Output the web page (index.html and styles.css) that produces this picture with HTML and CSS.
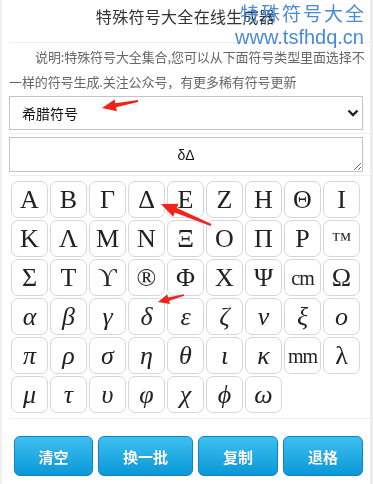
FILE: index.html
```html
<!DOCTYPE html>
<html lang="zh">
<head>
<meta charset="utf-8">
<title>特殊符号大全在线生成器</title>
<link rel="stylesheet" href="styles.css">
</head>
<body>
<div class="page">
  <header class="head">
    <h1 class="title">特殊符号大全在线生成器</h1>
  </header>
  <p class="desc">说明:特殊符号大全集合,您可以从下面符号类型里面选择不一样的符号生成.关注公众号，有更多稀有符号更新</p>
  <div class="row">
    <div class="select-wrap">
      <select class="select">
        <option>希腊符号</option>
      </select>
      <svg class="chev" width="12" height="8" viewBox="0 0 12 8"><path d="M1.5 1.5 L6 6 L10.5 1.5" fill="none" stroke="#222" stroke-width="2.4"/></svg>
    </div>
  </div>
  <div class="row">
    <textarea class="output">δΔ</textarea>
  </div>
  <div class="grid-row">
    <div class="grid">
      <span class="key">Α</span><span class="key">Β</span><span class="key">Γ</span><span class="key">Δ</span><span class="key">Ε</span><span class="key">Ζ</span><span class="key">Η</span><span class="key">Θ</span><span class="key">Ι</span>
      <span class="key">Κ</span><span class="key">Λ</span><span class="key">Μ</span><span class="key">Ν</span><span class="key">Ξ</span><span class="key">Ο</span><span class="key">Π</span><span class="key">Ρ</span><span class="key tm">™</span>
      <span class="key">Σ</span><span class="key">Τ</span><span class="key">ϒ</span><span class="key">®</span><span class="key">Φ</span><span class="key">Χ</span><span class="key">Ψ</span><span class="key unit">cm</span><span class="key">Ω</span>
      <span class="key it">α</span><span class="key it">β</span><span class="key it">γ</span><span class="key it">δ</span><span class="key it">ε</span><span class="key it">ζ</span><span class="key it">ν</span><span class="key it">ξ</span><span class="key it">ο</span>
      <span class="key it">π</span><span class="key it">ρ</span><span class="key it">σ</span><span class="key it">η</span><span class="key it">θ</span><span class="key it">ι</span><span class="key it">κ</span><span class="key unit">mm</span><span class="key">λ</span>
      <span class="key it">μ</span><span class="key it">τ</span><span class="key it">υ</span><span class="key it">φ</span><span class="key it">χ</span><span class="key it">ϕ</span><span class="key it">ω</span>
    </div>
  </div>
  <div class="actions">
    <button class="btn w79">清空</button>
    <button class="btn w95">换一批</button>
    <button class="btn w80">复制</button>
    <button class="btn w80">退格</button>
  </div>

  <div class="watermark">
    <div class="wm1">特殊符号大全</div>
    <div class="wm2">www.tsfhdq.cn</div>
  </div>

  <svg class="arrow" width="373" height="484" viewBox="0 0 373 484">
    <polygon points="102,108 114.6,99.4 115.3,103.3 137.8,100 138.2,102 116.1,107.3 116.9,111.2" fill="#f2231b"/>
    <polygon points="161,204 178.5,203.7 176.8,207.9 211.4,224.1 210.6,225.9 174.8,212.5 173.1,216.7" fill="#f2231b"/>
    <polygon points="158,302 167.3,294.3 168.1,297.4 183.8,294.2 184.2,295.8 169.1,300.8 169.9,303.9" fill="#f2231b"/>
  </svg>
</div>
</body>
</html>
```

FILE: styles.css
```css
html, body {
  margin: 0;
  padding: 0;
  background: #fff;
}
body {
  font-family: "Microsoft YaHei", "Noto Sans CJK SC", "Liberation Sans", sans-serif;
}
.page {
  position: relative;
  width: 368px;
  height: 484px;
  border-left: 2px solid #f0f0f0;
  border-right: 3px solid #ececec;
  overflow: hidden;
}
.head {
  margin-left: 7px;
  height: 42px;
  border-bottom: 1px solid #eee;
  display: flex;
  align-items: center;
  justify-content: center;
}
.title {
  margin: 0 0 0 -8px;
  padding-bottom: 10px;
  font-size: 16px;
  font-weight: normal;
  color: #333;
  line-height: 20px;
  letter-spacing: 0.3px;
}
.desc {
  margin: 1px 0 0 7px;
  font-size: 13px;
  line-height: 25px;
  color: #666;
  text-indent: 2em;
  letter-spacing: -0.1px;
}
.row {
  margin-left: 7px;
  padding: 2px 0 3px;
  border-bottom: 1px solid #eee;
}
.row + .row {
  padding-top: 3px;
}
.select-wrap {
  position: relative;
  width: 354px;
}
.select {
  appearance: none;
  -webkit-appearance: none;
  display: block;
  width: 354px;
  height: 34px;
  margin: 0;
  padding: 0 12px;
  border: 1px solid #c4c4c4;
  border-radius: 0;
  background: #fff;
  font-family: "Microsoft YaHei", "Noto Sans CJK SC", sans-serif;
  font-size: 14px;
  color: #111;
}
.chev {
  position: absolute;
  right: 4px;
  top: 13px;
}
.output {
  display: block;
  box-sizing: border-box;
  width: 354px;
  height: 35px;
  margin: 0;
  padding: 7px 4px;
  border: 1px solid #c4c4c4;
  font-family: "Liberation Sans", "Noto Sans", sans-serif;
  font-size: 14px;
  line-height: 20px;
  color: #111;
  text-align: center;
  resize: vertical;
}
.grid-row {
  margin-left: 7px;
  padding: 5px 0 5px;
  border-bottom: 1px solid #eee;
  height: 232px;
}
.grid {
  margin-left: 2px;
  display: grid;
  grid-template-columns: repeat(9, 37px);
  grid-auto-rows: 37px;
  gap: 2px;
}
.key {
  box-sizing: border-box;
  display: flex;
  align-items: center;
  justify-content: center;
  border: 1px solid #d6d6d6;
  border-radius: 7px;
  background: #fff;
  font-family: "Liberation Serif", "DejaVu Serif", serif;
  font-size: 26px;
  color: #222;
  line-height: 1;
}
.key.it {
  font-style: italic;
}
.key.tm {
  font-size: 20px;
}
.key.unit {
  font-size: 20px;
  letter-spacing: -1px;
}
.actions {
  margin: 17px 0 0 12px;
  display: flex;
  gap: 5px;
}
.btn {
  box-sizing: border-box;
  height: 40px;
  border: 1px solid #1380c8;
  border-radius: 6px;
  background: linear-gradient(#3dc0f0, #0a98d8);
  color: #fff;
  font-family: "Microsoft YaHei", "Noto Sans CJK SC", sans-serif;
  font-size: 15px;
  font-weight: bold;
  text-shadow: 0 0 1px rgba(0,0,0,0.2);
  padding: 0;
}
.w79 { width: 79px; }
.w80 { width: 80px; }
.w95 { width: 95px; }
.watermark {
  position: absolute;
  right: 6px;
  top: 1px;
  color: #4a8ad8;
  text-align: right;
}
.wm1 {
  font-family: "Noto Sans CJK SC", sans-serif;
  font-size: 19px;
  letter-spacing: 2px;
  line-height: 24px;
  margin-right: -2px;
}
.wm2 {
  font-family: "Liberation Sans", sans-serif;
  font-size: 20px;
  line-height: 24px;
}
.arrow {
  position: absolute;
  left: -2px;
  top: 0;
  pointer-events: none;
}
```
